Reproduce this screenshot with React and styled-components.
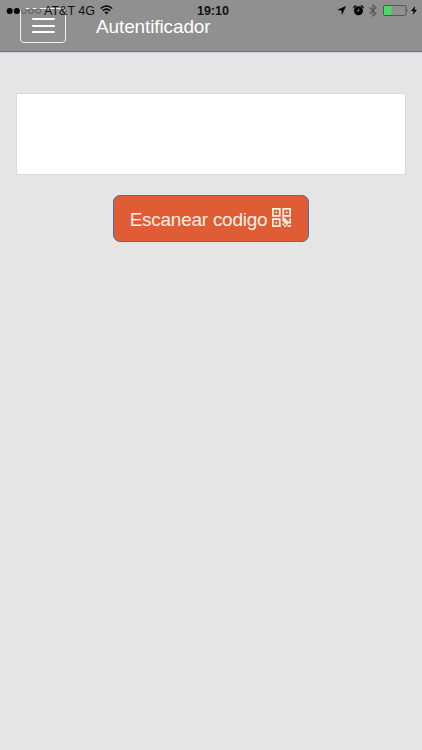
import React from 'react';
import styled, { createGlobalStyle } from 'styled-components';

const GlobalStyle = createGlobalStyle`
  * {
    box-sizing: border-box;
  }
  body {
    margin: 0;
    background: #e5e5e5;
    font-family: "Liberation Sans", Arial, sans-serif;
  }
`;

const Screen = styled.div`
  position: relative;
  min-height: 750px;
  overflow: hidden;
  background: #e5e5e5;
`;

const Navbar = styled.header`
  display: flex;
  align-items: flex-start;
  height: 52px;
  padding: 8px 20px 0;
  background: #909090;
  border-bottom: 1px solid #4f78b0;
  box-shadow: 0 1px 0 #ccd5e2;
`;

const MenuButton = styled.button`
  display: flex;
  flex-direction: column;
  align-items: center;
  justify-content: center;
  gap: 4.5px;
  width: 46px;
  height: 35px;
  padding: 0;
  background: transparent;
  border: 1px solid #f0f0f0;
  border-radius: 4px;
`;

const MenuLine = styled.span`
  width: 23px;
  height: 2px;
  border-radius: 1px;
  background: #fff;
`;

const Title = styled.h1`
  margin: 7px 0 0 30px;
  color: #fff;
  font-size: 19px;
  line-height: 23px;
  font-weight: 400;
  letter-spacing: -0.12px;
`;

const StatusBar = styled.div`
  position: absolute;
  top: 0;
  left: 0;
  right: 0;
  display: flex;
  align-items: center;
  justify-content: space-between;
  height: 21px;
  padding: 0 5px 0 6px;
  color: #111;
`;

const StatusGroup = styled.div`
  display: flex;
  align-items: center;
`;

const Carrier = styled.span`
  margin: 1px 5px 0 2px;
  font-size: 12.5px;
  line-height: 21px;
`;

const Clock = styled.span`
  margin: 1px 0 0 84px;
  font-size: 12.5px;
  font-weight: 700;
  line-height: 21px;
`;

const Content = styled.main`
  display: flex;
  flex-direction: column;
  align-items: center;
  gap: 20px;
  padding: 41px 16px 0;
`;

const CodeBox = styled.div`
  width: 100%;
  height: 82px;
  background: #fff;
  border: 1px solid #dadada;
`;

const ScanButton = styled.button`
  display: flex;
  align-items: center;
  justify-content: center;
  gap: 5px;
  width: 196px;
  height: 47px;
  padding: 2px 1px 0 0;
  color: #fff0e8;
  background: #e05c34;
  border: 1px solid #4a6ea8;
  border-radius: 7px;
  font-family: inherit;
  font-size: 19px;
  letter-spacing: -0.26px;
`;

const Icon = styled.svg`
  display: block;
  flex: none;
  margin-left: ${props => props.$left || 0}px;
  margin-top: ${props => props.$top || 0}px;
`;

function SignalDots() {
  return (
    <Icon width="36" height="8" viewBox="0 0 36 8">
      <circle cx="3.7" cy="4" r="3" fill="#000" />
      <circle cx="10.8" cy="4" r="3" fill="#000" />
      <g fill="none" stroke="#4a4a4a" strokeWidth="0.8">
        <circle cx="17.9" cy="4" r="2.5" />
        <circle cx="25" cy="4" r="2.5" />
        <circle cx="32.1" cy="4" r="2.5" />
      </g>
    </Icon>
  );
}

function WifiIcon() {
  return (
    <Icon width="13" height="10" viewBox="0 0 13 10" $top={-1}>
      <g fill="none" stroke="#000" strokeWidth="1.5">
        <path d="M0.7 3.5Q6.5 -1.6 12.3 3.5" />
        <path d="M2.8 5.7Q6.5 2.5 10.2 5.7" />
      </g>
      <path d="M4.4 7.3Q6.5 5.6 8.6 7.3L6.5 9.6z" />
    </Icon>
  );
}

function LocationIcon() {
  return (
    <Icon width="9" height="9" viewBox="0 0 9 9">
      <path d="M9 0L5 9L4.4 4.6L0 4z" />
    </Icon>
  );
}

function AlarmIcon() {
  return (
    <Icon width="11" height="11" viewBox="0 0 11 11" $left={7}>
      <circle cx="5.5" cy="5.8" r="4.5" />
      <path d="M0.4 3.4A2.2 2.2 0 0 1 3.7 0.8zM10.6 3.4A2.2 2.2 0 0 0 7.3 0.8z" />
      <path d="M5.8 3.5V6H3.7" fill="none" stroke="#909090" strokeWidth="0.9" />
    </Icon>
  );
}

function BluetoothIcon() {
  return (
    <Icon width="8" height="13" viewBox="0 0 8 13" $left={5}>
      <path
        d="M0.7 3.5L7 9.4L4 12V1L7 3.7L0.7 9.5"
        fill="none"
        stroke="#565656"
        strokeWidth="1.1"
      />
    </Icon>
  );
}

function BatteryIcon() {
  return (
    <Icon width="26" height="11" viewBox="0 0 26 11" $left={6}>
      <rect x="0.5" y="0.5" width="22.5" height="10" rx="1.5" fill="none" stroke="#555" />
      <path d="M1 1H8.5V10H1z" fill="#4cd964" />
      <path d="M23.8 3.7Q25.4 5.5 23.8 7.3z" fill="#333" />
    </Icon>
  );
}

function ChargingIcon() {
  return (
    <Icon width="6" height="9" viewBox="0 0 6 9" $left={2}>
      <path d="M4.1 0L0 5H2.5L1.7 9L6 3.8H3.5z" />
    </Icon>
  );
}

function QrIcon() {
  return (
    <Icon width="19" height="19" viewBox="0 0 11 11" $top={-5}>
      <path
        fill="#fff0e8"
        fillRule="evenodd"
        d="M0 0H5V5H0zM1 1V4H4V1zM2 2H3V3H2z
           M6 0H11V5H6zM7 1V4H10V1zM8 2H9V3H8z
           M0 6H5V11H0zM1 7V10H4V7zM2 8H3V9H2z
           M6 5H7V6H8V7H9V8H10V6H11V9H9V10H8V9H7V10H6V9H7V8H6z
           M7 10H8V11H7zM9 10H11V11H9z"
      />
    </Icon>
  );
}

export default function App() {
  return (
    <>
      <GlobalStyle />
      <Screen>
        <Navbar>
          <MenuButton aria-label="Menu">
            <MenuLine />
            <MenuLine />
            <MenuLine />
          </MenuButton>
          <Title>Autentificador</Title>
        </Navbar>
        <StatusBar>
          <StatusGroup>
            <SignalDots />
            <Carrier>AT&amp;T 4G</Carrier>
            <WifiIcon />
            <Clock>19:10</Clock>
          </StatusGroup>
          <StatusGroup>
            <LocationIcon />
            <AlarmIcon />
            <BluetoothIcon />
            <BatteryIcon />
            <ChargingIcon />
          </StatusGroup>
        </StatusBar>
        <Content>
          <CodeBox />
          <ScanButton>
            Escanear codigo
            <QrIcon />
          </ScanButton>
        </Content>
      </Screen>
    </>
  );
}
